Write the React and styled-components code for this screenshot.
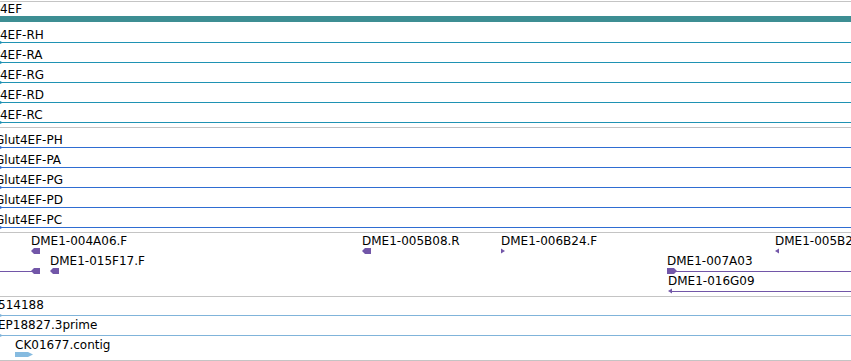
import styled, { createGlobalStyle } from "styled-components";

const GlobalStyle = createGlobalStyle`
  html, body { margin: 0; padding: 0; background: #fff; }
  body {
    font-family: "DejaVu Sans", Verdana, sans-serif;
    font-size: 12px;
    color: #000;
    overflow: hidden;
  }
`;

const View = styled.div`
  width: 851px;
  height: 361px;
  padding-top: 1px;
  box-sizing: border-box;
  overflow: hidden;
  background: #fff;
`;

const Track = styled.div`
  position: relative;
  height: ${(p) => p.$h}px;
  border-top: 1px solid #c4c4c4;
  ${(p) => (p.$last ? "border-bottom: 1px solid #c4c4c4;" : "")}
  overflow: hidden;
`;

const Label = styled.div`
  height: 14px;
  line-height: 14px;
  white-space: nowrap;
  margin-left: ${(p) => p.$shift || 0}px;
`;

const GeneRow = styled.div`
  margin-bottom: 1px;
`;

const GeneBar = styled.div`
  height: 6px;
  background: #3d8e93;
`;

const SubRow = styled.div`
  height: 20px;
  box-sizing: border-box;
  padding-top: ${(p) => p.$pad}px;
`;

const Strand = styled.div`
  position: relative;
  height: 1px;
  margin-top: ${(p) => p.$gap || 0}px;
  background: ${(p) => p.$color};

  &::before {
    content: "";
    position: absolute;
    left: 0;
    top: -1px;
    width: 3px;
    height: 3px;
    background: ${(p) => p.$color};
    clip-path: polygon(0 0, 100% 50%, 0 100%);
  }
`;

const FeatureBox = styled.div`
  position: absolute;
  left: ${(p) => p.$x}px;
  top: ${(p) => 1 + p.$lane * 20}px;
`;

const GlyphSvg = styled.svg`
  display: block;
  margin-left: ${(p) => p.$shift || 0}px;
`;

const PURPLE = "#7256a8";

const SHAPES = {
  left: { pts: "0,3 3,0 9,0 9,6 3,6", w: 9 },
  right: { pts: "0,0 7,0 10,3 7,6 0,6", w: 10 },
  leftTip: { pts: "4,0.5 0,3 4,5.5", w: 4 },
  rightTip: { pts: "0,0.5 4,3 0,5.5", w: 4 },
};

function Glyph({ shape, at = 0, line, color }) {
  const s = SHAPES[shape];
  const width = Math.max(at + s.w, line ? line[1] : 0);
  return (
    <GlyphSvg width={width} height="6" viewBox={`0 0 ${width} 6`}>
      {line && <rect x={line[0]} y="3" width={line[1] - line[0]} height="1" fill={color} />}
      <polygon points={s.pts} transform={`translate(${at} 0)`} fill={color} />
    </GlyphSvg>
  );
}

const transcripts = ["Glut4EF-RH", "Glut4EF-RA", "Glut4EF-RG", "Glut4EF-RD", "Glut4EF-RC"];
const proteins = ["Glut4EF-PH", "Glut4EF-PA", "Glut4EF-PG", "Glut4EF-PD", "Glut4EF-PC"];

const reads = [
  { name: "DME1-004A06.F", x: 31, lane: 0, shape: "left" },
  { name: "DME1-005B08.R", x: 362, lane: 0, shape: "left" },
  { name: "DME1-006B24.F", x: 501, lane: 0, shape: "rightTip" },
  { name: "DME1-005B2", x: 775, lane: 0, shape: "leftTip" },
  { name: "", x: 0, lane: 1, shape: "left", at: 31, line: [0, 33] },
  { name: "DME1-015F17.F", x: 50, lane: 1, shape: "left" },
  { name: "DME1-007A03", x: 667, lane: 1, shape: "right", line: [8, 184] },
  { name: "DME1-016G09", x: 668, lane: 2, shape: "leftTip", line: [2, 183] },
];

export default function App() {
  return (
    <View>
      <GlobalStyle />
      <Track $h={125}>
        <GeneRow>
          <Label $shift={-25}>Glut4EF</Label>
          <GeneBar />
        </GeneRow>
        {transcripts.map((t) => (
          <SubRow key={t} $pad={5}>
            <Label $shift={-25}>{t}</Label>
            <Strand $color="#1f92b3" />
          </SubRow>
        ))}
      </Track>

      <Track $h={104}>
        {proteins.map((t) => (
          <SubRow key={t} $pad={5}>
            <Label $shift={-5}>{t}</Label>
            <Strand $color="#2f6dd2" />
          </SubRow>
        ))}
      </Track>

      <Track $h={63}>
        {reads.map((r, i) => (
          <FeatureBox key={i} $x={r.x} $lane={r.lane}>
            <Label>{r.name}</Label>
            <Glyph shape={r.shape} at={r.at} line={r.line} color={PURPLE} />
          </FeatureBox>
        ))}
      </Track>

      <Track $h={63} $last>
        <SubRow $pad={1}>
          <Label $shift={-2}>514188</Label>
          <Strand $gap={3} $color="#80b4da" />
        </SubRow>
        <SubRow $pad={1}>
          <Label $shift={-2}>EP18827.3prime</Label>
          <Strand $gap={3} $color="#80b4da" />
        </SubRow>
        <SubRow $pad={1}>
          <Label $shift={15}>CK01677.contig</Label>
          <GlyphSvg $shift={15} width="18" height="5" viewBox="0 0 18 5">
            <polygon points="0,0 13,0 18,2.5 13,5 0,5" fill="#86bbe0" />
          </GlyphSvg>
        </SubRow>
      </Track>
    </View>
  );
}
